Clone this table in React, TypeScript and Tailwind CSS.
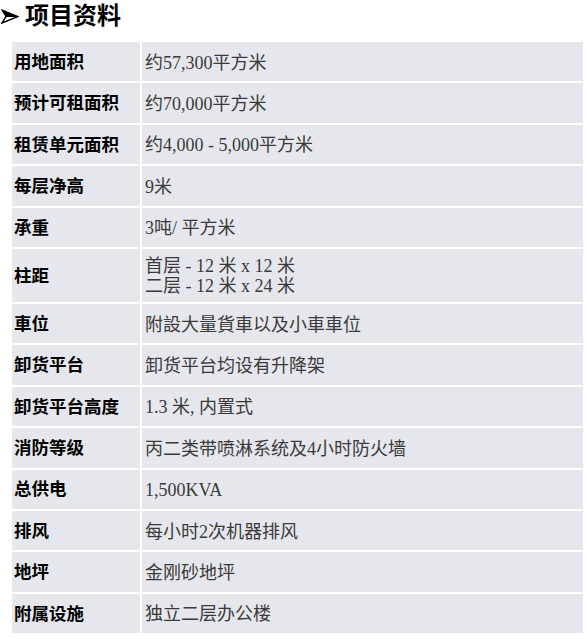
import React from 'react';

type Row = { label: string; value: string[]; tall?: boolean };

const rows: Row[] = [
    { label: '用地面积', value: ['约57,300平方米'] },
    { label: '预计可租面积', value: ['约70,000平方米'] },
    { label: '租赁单元面积', value: ['约4,000 - 5,000平方米'] },
    { label: '每层净高', value: ['9米'] },
    { label: '承重', value: ['3吨/ 平方米'] },
    { label: '柱距', value: ['首层 - 12 米 x 12 米', '二层 - 12 米 x 24 米'], tall: true },
    { label: '車位', value: ['附設大量貨車以及小車車位'] },
    { label: '卸货平台', value: ['卸货平台均设有升降架'] },
    { label: '卸货平台高度', value: ['1.3 米, 内置式'] },
    { label: '消防等级', value: ['丙二类带喷淋系统及4小时防火墙'] },
    { label: '总供电', value: ['1,500KVA'] },
    { label: '排风', value: ['每小时2次机器排风'] },
    { label: '地坪', value: ['金刚砂地坪'] },
    { label: '附属设施', value: ['独立二层办公楼'] },
];

const sans = "font-['Liberation_Sans','Noto_Sans_CJK_SC',sans-serif]";
const serif = "font-['Liberation_Serif','Noto_Sans_CJK_SC',serif]";

// bullet arrowhead, like the Wingdings one in the original deck
const Arrowhead = () => (
    <svg width="18" height="15" viewBox="0 0 18 15" className="shrink-0">
        <path d="M1 1 L17 7.5 L5 7.5 Z" fill="#000" />
        <path d="M1 14 L17 7.5 L5 7.5 Z" fill="none" stroke="#000" strokeWidth="1.2" strokeLinejoin="miter" />
        <path d="M1 1 L17 7.5 L1 14 L5 7.5 Z" fill="none" stroke="#000" strokeWidth="1.2" />
    </svg>
);

export default function App() {
    return (
        <div className="w-[587px] h-[639px] bg-white overflow-hidden">
            {/* Title */}
            <div className={`h-[42px] flex items-start pt-[1px] ${sans}`}>
                <div className="h-[30px] flex items-center pl-[1px] pr-[6px]">
                    <Arrowhead />
                </div>
                <span className="text-[24px] leading-[30px] font-bold text-black">项目资料</span>
            </div>

            {/* Table */}
            <div className="ml-[12px] w-[571px] flex flex-col gap-[2px]">
                {rows.map((row) => (
                    <div
                        key={row.label}
                        className={`grid grid-cols-[128px_1fr] gap-[2px] ${row.tall ? 'h-[53px]' : 'h-[39.4px]'}`}
                    >
                        <div className={`bg-[#e6e7ec] flex items-center pl-[2px] pt-[2px] ${sans}`}>
                            <span className="text-[17.5px] font-bold text-black leading-none">{row.label}</span>
                        </div>
                        <div className={`bg-[#e6e7ec] flex flex-col justify-center pl-[3px] pt-[2px] ${serif}`}>
                            {row.value.map((v) => (
                                <span key={v} className="text-[18px] leading-[20px] text-[#3a3a3a]">
                                    {v}
                                </span>
                            ))}
                        </div>
                    </div>
                ))}
            </div>
        </div>
    );
}
